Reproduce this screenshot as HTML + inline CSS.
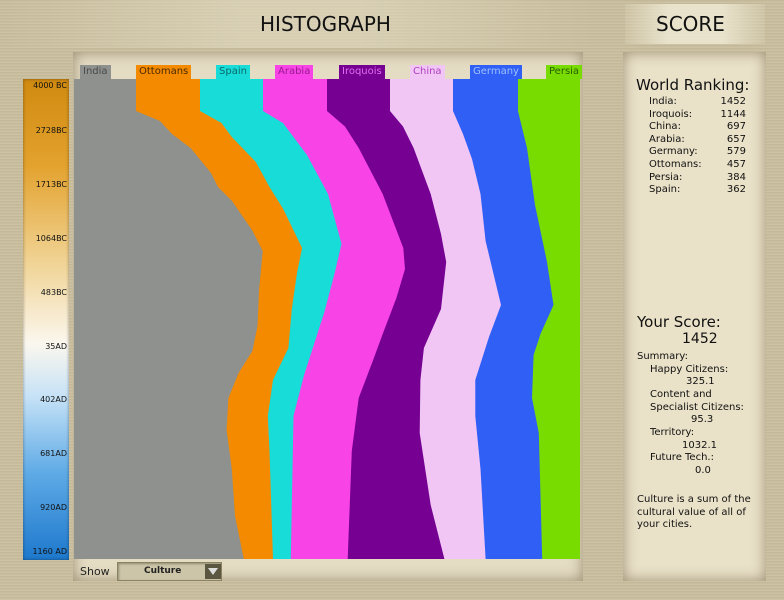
<!DOCTYPE html>
<html><head><meta charset="utf-8"><style>
*{margin:0;padding:0;box-sizing:border-box}
body{width:784px;height:600px;overflow:hidden;position:relative;font-family:"DejaVu Sans","Liberation Sans",sans-serif;
background:repeating-linear-gradient(180deg,#cdc3a3 0px,#b9ad8b 1px,#d6cdb0 2px,#c3b897 3px);}
.a{position:absolute;white-space:nowrap}
.hdr{position:absolute;font-family:"DejaVu Sans","Liberation Sans",sans-serif;font-size:20px;color:#111}
.panel{position:absolute;background:#e4dcc3;box-shadow:inset 0 0 14px rgba(90,70,40,.55)}
.tab{position:absolute;top:65px;height:14px;font-size:10px;line-height:14px;padding:0 3px}
.tl{position:absolute;right:0;width:45px;text-align:right;font-size:8px;color:#111;padding-right:2px}
.sc{font-size:10px;color:#111;line-height:12.6px}
</style></head><body>
<div class="a" style="left:0;top:0;width:600px;height:48px;background:linear-gradient(90deg,rgba(220,212,185,0) 0,rgba(226,219,195,.6) 40%,rgba(226,219,195,.6) 60%,rgba(220,212,185,0))"></div>
<div class="hdr" style="left:260px;top:12px">HISTOGRAPH</div>
<div class="a" style="left:625px;top:4px;width:140px;height:40px;background:linear-gradient(90deg,rgba(230,224,200,.2),rgba(236,230,208,.9) 30%,rgba(236,230,208,.9) 70%,rgba(230,224,200,.2))"></div>
<div class="hdr" style="left:656px;top:12px">SCORE</div>

<div class="panel" style="left:73px;top:52px;width:510px;height:529px"></div>
<div class="a" style="left:23px;top:79px;width:46px;height:481px;background:linear-gradient(180deg,#d08a10 0%,#e3a22e 18%,#f0d394 38%,#fbf7ee 55%,#c6e2f6 66%,#5eaae6 82%,#1d78cc 100%);box-shadow:inset 0 0 3px rgba(0,0,0,.4)">
<div class="tl" style="top:2px">4000 BC</div>
<div class="tl" style="top:47px">2728BC</div>
<div class="tl" style="top:101px">1713BC</div>
<div class="tl" style="top:155px">1064BC</div>
<div class="tl" style="top:209px">483BC</div>
<div class="tl" style="top:263px">35AD</div>
<div class="tl" style="top:316px">402AD</div>
<div class="tl" style="top:370px">681AD</div>
<div class="tl" style="top:424px">920AD</div>
<div class="tl" style="top:468px">1160 AD</div>
</div>

<svg class="a" style="left:0;top:0" width="784" height="600">
<rect x="74" y="79" width="506" height="480" fill="#78dc00"/>
<polygon fill="#2f5ff5" points="74,79 518,79 518,111 527,148 535,205 547,262 553.5,305 540.5,334 533.6,355 532,398 538.8,433 542.2,559 74,559"/>
<polygon fill="#f1c6f5" points="74,79 453,79 453,111 463,134 472,159 480.5,194 485.6,241 501,305 489,337 475.3,380 475.3,416 480.5,469 485.6,559 74,559"/>
<polygon fill="#750092" points="74,79 390,79 390,111 403,126.5 413.6,148 430.7,194 441,234 446.2,262 441,309 423.9,348 420.4,380 419.7,433 430.7,505 444.4,559 74,559"/>
<polygon fill="#f843e6" points="74,79 327,79 327,111 345,126.5 358.7,148 382.7,194 403.3,248 405,269 396.4,298 382.7,334 372.4,362 358.7,398 351.8,451 347.7,559 74,559"/>
<polygon fill="#18dcd8" points="74,79 263,79 263,111 283,123 307,155 328,194 341.5,244 334.7,273 324.4,312 314.1,344 303.8,376 293.5,416 290.8,559 74,559"/>
<polygon fill="#f48a00" points="74,79 200,79 200,111 221.5,123 231.8,137 255.8,162 269.5,187 283.2,209 302.1,248 297,273 291.8,309 288.4,348 273,380 267.8,416 269.5,451 273,559 74,559"/>
<polygon fill="#8e918d" points="74,79 136,79 136,111 160,121 172,134 190.6,148 211,173 218,187 232,201 252,230 262.7,251 259,291 257.5,326 252.4,351 238.6,373 228.4,398 226.6,430 231.8,469 235,516 243.8,559 74,559"/>
</svg>

<div class="tab" style="left:80px;background:#8e918d;color:#4a4a4a">India</div>
<div class="tab" style="left:136px;background:#f48a00;color:#4a2a00">Ottomans</div>
<div class="tab" style="left:216px;background:#18dcd8;color:#0a6a6a">Spain</div>
<div class="tab" style="left:275px;background:#f843e6;color:#9a1a90">Arabia</div>
<div class="tab" style="left:339px;background:#750092;color:#e070f0">Iroquois</div>
<div class="tab" style="left:410px;background:#f1c6f5;color:#b040c0">China</div>
<div class="tab" style="left:470px;background:#2f5ff5;color:#a0c0ff">Germany</div>
<div class="tab" style="left:546px;background:#78dc00;color:#2a6000">Persia</div>

<div class="a" style="left:80px;top:565px;font-size:11px;color:#222">Show</div>
<div class="a" style="left:117px;top:562px;width:105px;height:19px;background:#cdc5a8;border:1px solid #8a8260;box-shadow:inset 1px 1px 2px rgba(0,0,0,.3)">
<div class="a" style="left:26px;top:3px;font-size:9px;font-weight:bold;color:#222">Culture</div>
<div class="a" style="left:87px;top:1px;width:16px;height:15px;background:#5a5640"><div class="a" style="left:3px;top:4px;width:0;height:0;border-left:5px solid transparent;border-right:5px solid transparent;border-top:7px solid #ddd"></div></div>
</div>

<div class="panel" style="left:623px;top:52px;width:143px;height:529px;background:#e9e1c8"></div>
<div class="a" style="left:636px;top:76px;font-size:15px;color:#111">World Ranking:</div>
<div class="a sc" style="left:649px;top:96px">India:<br>Iroquois:<br>China:<br>Arabia:<br>Germany:<br>Ottomans:<br>Persia:<br>Spain:</div>
<div class="a sc" style="left:700px;top:96px;width:46px;text-align:right">1452<br>1144<br>697<br>657<br>579<br>457<br>384<br>362</div>
<div class="a" style="left:637px;top:313px;font-size:15px;color:#111">Your Score:</div>
<div class="a" style="left:682px;top:331px;font-size:14px;color:#111">1452</div>
<div class="a sc" style="left:637px;top:351px">Summary:</div>
<div class="a sc" style="left:650px;top:364px">Happy Citizens:</div>
<div class="a sc" style="left:686px;top:376px">325.1</div>
<div class="a sc" style="left:650px;top:389px">Content and</div>
<div class="a sc" style="left:650px;top:402px">Specialist Citizens:</div>
<div class="a sc" style="left:691px;top:414px">95.3</div>
<div class="a sc" style="left:650px;top:427px">Territory:</div>
<div class="a sc" style="left:682px;top:440px">1032.1</div>
<div class="a sc" style="left:650px;top:452px">Future Tech.:</div>
<div class="a sc" style="left:695px;top:465px">0.0</div>
<div class="a sc" style="left:637px;top:494px">Culture is a sum of the<br>cultural value of all of<br>your cities.</div>
</body></html>
